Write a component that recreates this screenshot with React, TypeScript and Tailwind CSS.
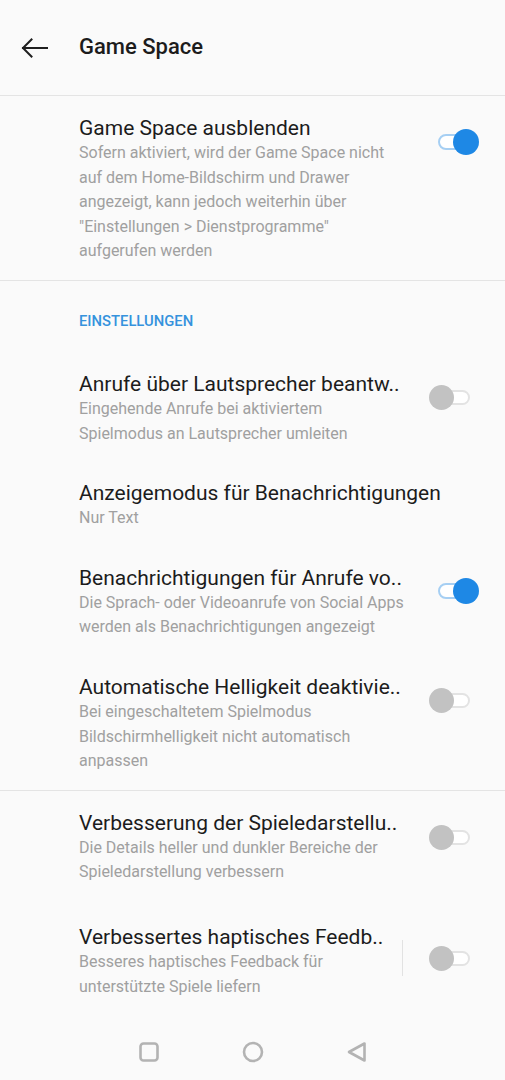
import React from "react";

function Toggle({ on }: { on: boolean }) {
  if (on) {
    return (
      <div className="relative w-[50px] h-[26px]">
        <div className="absolute left-[9px] top-[5px] w-[32px] h-[16px] rounded-full border-2 border-[#a6cff3] bg-white" />
        <div className="absolute right-0 top-0 w-[26px] h-[26px] rounded-full bg-[#1e88e5]" />
      </div>
    );
  }
  return (
    <div className="relative w-[50px] h-[26px]">
      <div className="absolute right-[9px] top-[6px] w-[32px] h-[15px] rounded-full border-2 border-[#e3e3e3] bg-white" />
      <div className="absolute left-0 top-[1px] w-[25px] h-[25px] rounded-full bg-[#c2c2c2]" />
    </div>
  );
}

type RowProps = {
  title: string;
  desc: string[];
  toggle?: boolean;
  divider?: boolean;
  pt?: string;
  pb?: string;
  tmt?: string;
};

function Row({ title, desc, toggle, divider, pt = "pt-[17px]", pb = "pb-[17px]", tmt = "mt-[13px]" }: RowProps) {
  return (
    <div className={`flex items-start pl-[79px] pr-[26px] ${pt} ${pb}`}>
      <div className="flex-1 min-w-0">
        <div className="text-[21px] leading-[26px] text-[#1c1c1c] whitespace-nowrap">{title}</div>
        {desc.map((d, i) => (
          <div key={i} className="text-[16px] leading-[24.6px] text-[#a0a0a0] whitespace-nowrap">
            {d}
          </div>
        ))}
      </div>
      {toggle !== undefined && (
        <div className={`flex items-center ${tmt}`}>
          {divider && <div className="w-px h-[36px] bg-[#e2e2e2] mr-[26px]" />}
          <Toggle on={toggle} />
        </div>
      )}
    </div>
  );
}

export default function App() {
  return (
    <div
      className="w-[505px] h-[1080px] bg-[#fafafa] flex flex-col overflow-hidden"
      style={{ fontFamily: "Roboto, 'Noto Sans', sans-serif" }}
    >
      {/* Header */}
      <div className="h-[96px] flex items-center border-b border-[#e4e4e4] shrink-0">
        <div className="w-[79px] flex items-center pl-[21px]">
          <svg width="27" height="20" viewBox="0 0 27 20" fill="none">
            <path d="M26 10H2M10.5 1.5L2 10l8.5 8.5" stroke="#1f1f1f" strokeWidth="2" strokeLinecap="square" />
          </svg>
        </div>
        <div className="text-[22px] font-medium text-[#1c1c1c] mt-[-2px]">Game Space</div>
      </div>

      {/* Section 1 */}
      <div className="border-b border-[#e4e4e4]">
        <div className="flex pl-[79px] pr-[26px] pt-[19px] pb-[16px]">
          <div className="flex-1">
            <div className="text-[21px] leading-[26px] text-[#1c1c1c]">Game Space ausblenden</div>
            {[
              "Sofern aktiviert, wird der Game Space nicht",
              "auf dem Home-Bildschirm und Drawer",
              "angezeigt, kann jedoch weiterhin über",
              "\"Einstellungen > Dienstprogramme\"",
              "aufgerufen werden",
            ].map((d, i) => (
              <div key={i} className="text-[16px] leading-[24.6px] text-[#a0a0a0] whitespace-nowrap">
                {d}
              </div>
            ))}
          </div>
          <div className="pt-[14px]">
            <Toggle on={true} />
          </div>
        </div>
      </div>

      {/* Section 2 */}
      <div className="border-b border-[#e4e4e4]">
        <div className="pl-[79px] pt-[30px] pb-[23px] text-[14.8px] leading-[20px] font-medium text-[#3592dd]">
          EINSTELLUNGEN
        </div>
        <Row
          title="Anrufe über Lautsprecher beantw.."
          desc={["Eingehende Anrufe bei aktiviertem", "Spielmodus an Lautsprecher umleiten"]}
          toggle={false}
        />
        <Row title="Anzeigemodus für Benachrichtigungen" desc={["Nur Text"]} />
        <Row
          title="Benachrichtigungen für Anrufe vo.."
          desc={["Die Sprach- oder Videoanrufe von Social Apps", "werden als Benachrichtigungen angezeigt"]}
          toggle={true}
        />
        <Row
          title="Automatische Helligkeit deaktivie.."
          desc={["Bei eingeschaltetem Spielmodus", "Bildschirmhelligkeit nicht automatisch", "anpassen"]}
          toggle={false}
          pb="pb-[16px]"
        />
      </div>

      {/* Section 3 */}
      <div>
        <Row
          title="Verbesserung der Spieledarstellu.."
          desc={["Die Details heller und dunkler Bereiche der", "Spieledarstellung verbessern"]}
          toggle={false}
          pt="pt-[19px]"
          pb="pb-[20px]"
          tmt="mt-[14px]"
        />
        <Row
          title="Verbessertes haptisches Feedb.."
          desc={["Besseres haptisches Feedback für", "unterstützte Spiele liefern"]}
          toggle={false}
          divider
          pt="pt-[19px]"
          tmt="mt-[16px]"
        />
      </div>

      <div className="flex-1" />

      {/* Nav bar */}
      <div className="h-[60px] flex items-center justify-center gap-[77px] pt-[4px] shrink-0">
        <svg width="22" height="22" viewBox="0 0 22 22" fill="none">
          <rect x="2.5" y="2.5" width="17" height="17" rx="3" stroke="#b3b3b3" strokeWidth="2.6" />
        </svg>
        <svg width="24" height="24" viewBox="0 0 24 24" fill="none" className="mx-[4px]">
          <circle cx="12" cy="12" r="9" stroke="#b3b3b3" strokeWidth="2.6" />
        </svg>
        <svg width="22" height="22" viewBox="0 0 22 22" fill="none">
          <path d="M18.5 2.5v17L3 11z" stroke="#b3b3b3" strokeWidth="2.6" strokeLinejoin="round" />
        </svg>
      </div>
    </div>
  );
}
